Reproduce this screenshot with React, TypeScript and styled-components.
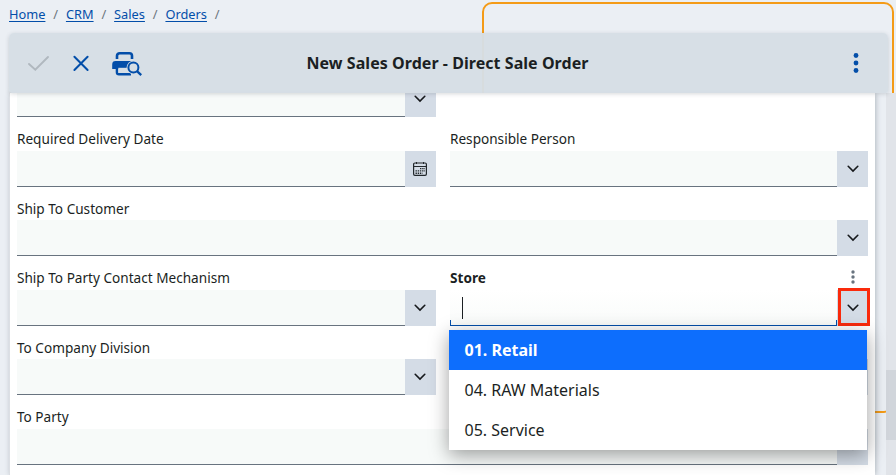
import React from 'react';
import styled, { createGlobalStyle, css } from 'styled-components';

const GlobalStyle = createGlobalStyle`
  * { box-sizing: border-box; }
  body { margin: 0; background: #ebeff4; font-family: 'Noto Sans', 'Open Sans', sans-serif; color: #1b1f23; }
`;

const Page = styled.div`
  position: relative;
  display: flex;
  flex-direction: column;
  width: 896px;
  height: 475px;
  overflow: hidden;
  background: #ebeff4;
`;

const Highlight = styled.div`
  position: absolute;
  left: 482px;
  top: 2px;
  width: 412px;
  height: 411px;
  border: 2px solid #f49b17;
  border-radius: 10px;
`;

const Breadcrumbs = styled.nav`
  flex: none;
  display: flex;
  align-items: center;
  height: 33px;
  padding: 0 9px 6px;
  font-size: 12.8px;
  line-height: 18px;
`;

const Crumb = styled.a`
  color: #034ea9;
  text-decoration: underline;
  text-decoration-thickness: 1px;
  text-underline-offset: 2px;
`;

const Slash = styled.span`
  width: 20.5px;
  text-align: center;
  color: #6c757d;
`;

const Toolbar = styled.header`
  position: relative;
  z-index: 2;
  flex: none;
  display: grid;
  grid-template-columns: 200px 1fr 200px;
  align-items: center;
  height: 60px;
  margin: 0 8px 0 9px;
  border-radius: 5px 5px 2px 4px;
  background: rgba(214, 222, 229, 0.97);
  box-shadow: 0 1px 4px rgba(60, 70, 80, 0.2);
`;

const Actions = styled.div`
  display: flex;
  align-items: center;
  padding-left: 18px;
`;

const IconButton = styled.button<{ $gap?: number }>`
  display: flex;
  padding: 0;
  margin: 0 ${p => p.$gap ?? 0}px 0 0;
  border: 0;
  background: none;
`;

const Title = styled.h1`
  margin: 0;
  padding-right: 2px;
  font-size: 16px;
  line-height: 24px;
  font-weight: 700;
  letter-spacing: 0.05px;
  text-align: center;
  white-space: nowrap;
`;

const MoreActions = styled.div`
  display: flex;
  justify-content: flex-end;
  padding-right: 29.4px;
`;

const Content = styled.main`
  position: relative;
  flex: 1;
  display: flex;
  min-height: 0;
`;

const Panel = styled.section`
  width: 866px;
  margin-left: 9px;
  padding: 0 7px;
  border-left: 1px solid #dcdfe4;
  background: #fff;
  box-shadow: 1px 0 5px rgba(60, 70, 80, 0.32);
`;

const Scrollbar = styled.div`
  width: 10px;
  margin-left: auto;
  padding-top: 277px;
  background: #e1e4e9;
`;

const Thumb = styled.div`
  height: 70px;
  background: #d1d5db;
`;

const Row = styled.div<{ $height: number; $wide?: boolean }>`
  display: grid;
  grid-template-columns: ${p => (p.$wide ? '851px' : '419px 418px')};
  column-gap: 14px;
  align-items: end;
  height: ${p => p.$height}px;
`;

const FieldBox = styled.div`
  display: flex;
  flex-direction: column;
  justify-content: space-between;
  height: 100%;
`;

const LabelLine = styled.div<{ $strong?: boolean }>`
  display: flex;
  justify-content: space-between;
  height: 32px;
  padding-top: 12px;
  font-size: 13.6px;
  line-height: 20px;
  font-weight: ${p => (p.$strong ? 700 : 400)};
  white-space: nowrap;
`;

const Control = styled.div<{ $height?: number }>`
  display: flex;
  height: ${p => p.$height ?? 36}px;
`;

const Input = styled.div<{ $focused?: boolean }>`
  flex: 1;
  border-bottom: 1px solid #68737f;
  background: #f7faf9;
  ${p =>
    p.$focused &&
    css`
      display: flex;
      padding: 7px 0 0 12px;
      border-bottom-color: #034ea9;
      background:
        linear-gradient(#034ea9, #034ea9) left bottom / 1px 5px no-repeat,
        linear-gradient(#034ea9, #034ea9) right bottom / 1px 5px no-repeat,
        linear-gradient(#fff, #f9fbfa);
    `}
`;

const Caret = styled.span`
  width: 1px;
  height: 22px;
  background: #1b1f23;
`;

const FieldButton = styled.button<{ $marked?: boolean; $clipped?: boolean; $inset?: boolean }>`
  display: flex;
  align-items: ${p => (p.$clipped ? 'flex-start' : 'center')};
  justify-content: center;
  width: 31px;
  padding: ${p => (p.$clipped ? 2 : 0)}px ${p => (p.$inset ? 1 : 0)}px 0 0;
  border: 0;
  background: #d4dce6;
  ${p =>
    p.$marked &&
    css`
      position: relative;
      &::after {
        content: '';
        position: absolute;
        inset: -2px -2px 0 1px;
        border: 3px solid #fa2a0c;
      }
    `}
`;

const DotMenu = styled.span`
  display: flex;
  padding: 1px 12px 0 0;
`;

const Listbox = styled.ul`
  position: absolute;
  z-index: 3;
  left: 449px;
  top: 237px;
  width: 418px;
  margin: 0;
  padding: 0;
  list-style: none;
  background: #fff;
  box-shadow: 0 5px 18px rgba(0, 0, 0, 0.38);
`;

const Option = styled.li<{ $selected?: boolean }>`
  height: 40px;
  padding-left: 15.5px;
  font-size: 16px;
  line-height: 40px;
  font-weight: ${p => (p.$selected ? 700 : 400)};
  color: ${p => (p.$selected ? '#fff' : '#1b1f23')};
  background: ${p => (p.$selected ? '#0d6efd' : '#fff')};
`;

const Chevron = () => (
  <svg width="12" height="8" viewBox="0 0 12 8" fill="none" stroke="#16191c" strokeWidth="1.6" strokeLinecap="round">
    <path d="M1.2 1.3 6 6.1 10.8 1.3" />
  </svg>
);

const Calendar = () => (
  <svg width="14" height="14" viewBox="0 0 14 14" fill="none" stroke="#22272b">
    <rect x=".6" y="1" width="12.8" height="12.4" rx="1.3" strokeWidth="1.2" />
    <path d="M.6 4.5h12.8M3.5 0v2M10.5 0v2" />
    <path d="M7 6.6h5M2.5 8.9H12M2.5 11.2h7" strokeWidth="1.4" strokeDasharray="1.4 .8" />
  </svg>
);

const Dots = ({ size, color, radius, step }: { size: number; color: string; radius: number; step: number }) => (
  <svg width="6" height={size} fill={color}>
    {[-1, 0, 1].map(n => (
      <circle key={n} cx="3" cy={size / 2 + n * step} r={radius} />
    ))}
  </svg>
);

const CheckIcon = () => (
  <svg width="23" height="20" fill="none" stroke="#b0b8bf" strokeWidth="1.9" strokeLinecap="round">
    <path d="m2 11 6.3 5.6L21 4" />
  </svg>
);

const CloseIcon = () => (
  <svg width="18" height="18" fill="none" stroke="#034ea9" strokeWidth="2" strokeLinecap="round">
    <path d="m2.4 2.8 13.2 13.2M15.6 2.8 2.4 16" />
  </svg>
);

const PrintPreviewIcon = () => (
  <svg width="32" height="26" viewBox="0 0 32 26" fill="none" stroke="#034ea9">
    <path d="M5 9V5.8A2.6 2.6 0 0 1 7.6 3.2h9.8A2.6 2.6 0 0 1 20 5.8V9" strokeWidth="2.6" />
    <path d="M.2 19v-4.6A3.4 3.4 0 0 1 3.6 11h17.2v8Z" fill="#034ea9" stroke="none" />
    <path d="M5 16v6.3a2 2 0 0 0 2 2h12" strokeWidth="2.6" />
    <path d="M6.3 17.8h9V23h-9z" fill="#d6dee5" stroke="none" />
    <circle cx="21.4" cy="17.5" r="6.8" fill="#d6dee5" stroke="none" />
    <circle cx="21.4" cy="17.5" r="5" strokeWidth="2" />
    <path d="m25 21.1 4.2 4" strokeWidth="2.3" />
  </svg>
);

interface FieldProps {
  label: string;
  calendar?: boolean;
  active?: boolean;
  inset?: boolean;
}

const Field = ({ label, calendar, active, inset }: FieldProps) => (
  <FieldBox>
    <LabelLine $strong={active}>
      {label}
      {active && (
        <DotMenu>
          <Dots size={16} color="#68737f" radius={1.7} step={5} />
        </DotMenu>
      )}
    </LabelLine>
    <Control>
      <Input $focused={active}>{active && <Caret />}</Input>
      <FieldButton $marked={active} $inset={inset}>{calendar ? <Calendar /> : <Chevron />}</FieldButton>
    </Control>
  </FieldBox>
);

const crumbs = ['Home', 'CRM', 'Sales', 'Orders'];
const options = ['01. Retail', '04. RAW Materials', '05. Service'];

export default function App() {
  return (
    <Page>
      <GlobalStyle />
      <Highlight />
      <Breadcrumbs>
        {crumbs.map(name => (
          <React.Fragment key={name}>
            <Crumb>{name}</Crumb>
            <Slash>/</Slash>
          </React.Fragment>
        ))}
      </Breadcrumbs>
      <Toolbar>
        <Actions>
          <IconButton $gap={22}><CheckIcon /></IconButton>
          <IconButton $gap={22}><CloseIcon /></IconButton>
          <IconButton><PrintPreviewIcon /></IconButton>
        </Actions>
        <Title>New Sales Order - Direct Sale Order</Title>
        <MoreActions>
          <Dots size={22} color="#034ea9" radius={2.4} step={7.5} />
        </MoreActions>
      </Toolbar>
      <Content>
        <Panel>
          <Row $height={24}>
            <Control $height={24}>
              <Input />
              <FieldButton $clipped $inset><Chevron /></FieldButton>
            </Control>
          </Row>
          <Row $height={70}>
            <Field label="Required Delivery Date" calendar inset />
            <Field label="Responsible Person" />
          </Row>
          <Row $height={69} $wide>
            <Field label="Ship To Customer" />
          </Row>
          <Row $height={70}>
            <Field label="Ship To Party Contact Mechanism" inset />
            <Field label="Store" active />
          </Row>
          <Row $height={69}>
            <Field label="To Company Division" inset />
            <Field label="" />
          </Row>
          <Row $height={70} $wide>
            <Field label="To Party" />
          </Row>
        </Panel>
        <Scrollbar><Thumb /></Scrollbar>
        <Listbox>
          {options.map((name, i) => (
            <Option key={name} $selected={i === 0}>{name}</Option>
          ))}
        </Listbox>
      </Content>
    </Page>
  );
}
